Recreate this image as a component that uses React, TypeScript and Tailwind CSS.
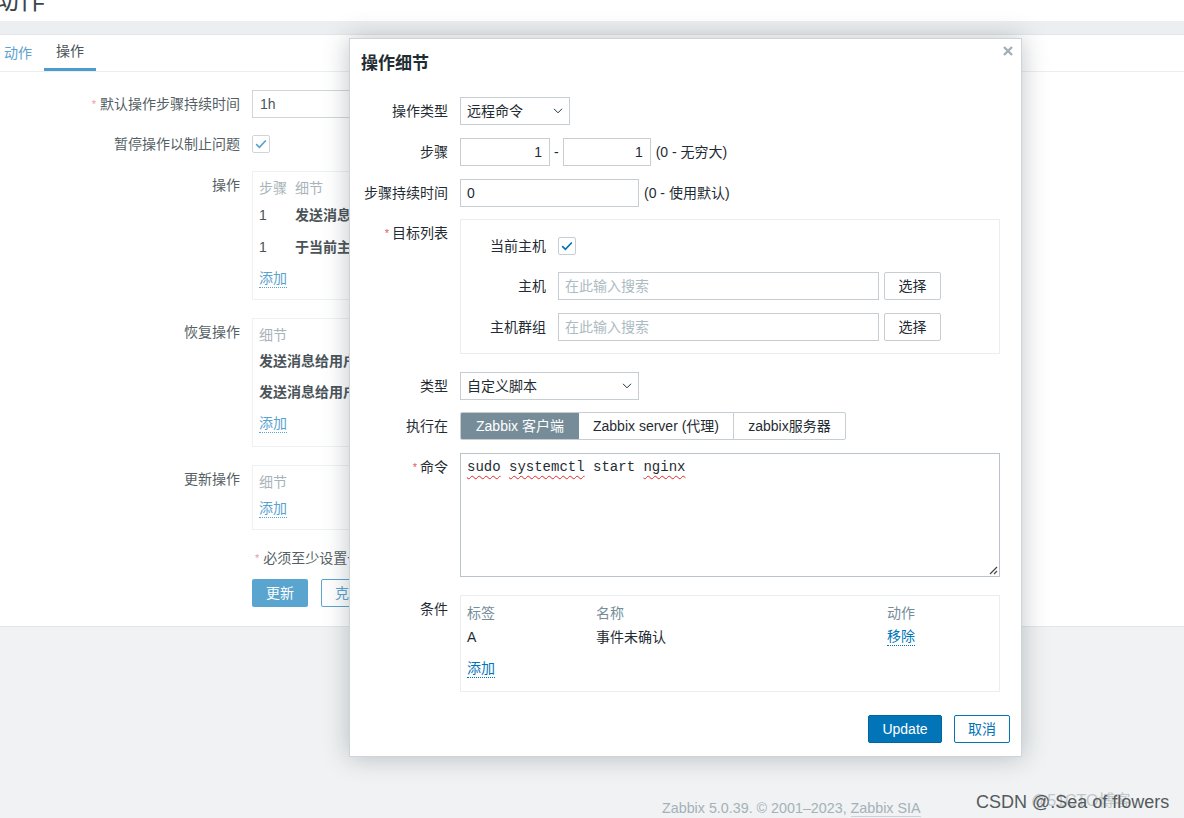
import React from 'react';

const Chevron: React.FC = () => (
  <svg width="10" height="6" viewBox="0 0 10 6" className="shrink-0">
    <path d="M1 0.8l4 4 4-4" fill="none" stroke="#1f2c33" strokeWidth="1" />
  </svg>
);

const Check: React.FC<{ color: string }> = ({ color }) => (
  <svg width="12" height="10" viewBox="0 0 12 10">
    <path d="M1.2 5.2l3.2 3.1 6.4-6.8" fill="none" stroke={color} strokeWidth="1.7" />
  </svg>
);

const Select: React.FC<{ value: string; width: string }> = ({ value, width }) => (
  <div className={`${width} h-[28px] border border-[#c6ced3] bg-white flex items-center justify-between pl-[6px] pr-[6px] leading-[26px]`}>
    <span>{value}</span>
    <Chevron />
  </div>
);

const Row: React.FC<{ label: string; required?: boolean; className?: string; children: React.ReactNode }> = ({
  label,
  required,
  className = '',
  children,
}) => (
  <div className={`flex ${className}`}>
    <div className="w-[86px] mr-[12px] shrink-0 text-right leading-[28px] whitespace-nowrap">
      {required && <span className="text-[#e45959] text-[11px] mr-[3px] align-top">*</span>}
      {label}
    </div>
    {children}
  </div>
);

const Link: React.FC<{ children: React.ReactNode; faded?: boolean }> = ({ children, faded }) => (
  <span
    className={
      faded
        ? 'text-[#5aa2d0] border-b border-dotted border-[#5aa2d0] leading-[17px] inline-block'
        : 'text-[#0275b8] border-b border-dotted border-[#0275b8] leading-[17px] inline-block'
    }
  >
    {children}
  </span>
);

// background page (the action edit form behind the popup), cut off by the popup
const BgForm: React.FC = () => {
  const label = 'w-[240px] mr-[12px] shrink-0 text-right leading-[28px] text-[#555f65] whitespace-nowrap';
  return (
    <div className="mt-[18px]">
      <div className="flex">
        <div className={label}>
          <span className="text-[#ec9a9a] text-[11px] mr-[4px] align-top">*</span>默认操作步骤持续时间
        </div>
        <div className="w-[160px] h-[28px] border border-[#cfd6da] pl-[7px] leading-[26px] text-[#4a5358]">1h</div>
      </div>

      <div className="flex mt-[12px]">
        <div className={label}>暂停操作以制止问题</div>
        <div className="h-[28px] flex items-center">
          <div className="w-[18px] h-[18px] border border-[#cfd6da] rounded-[2px] flex items-center justify-center">
            <Check color="#5aa2d0" />
          </div>
        </div>
      </div>

      <div className="flex mt-[13px]">
        <div className={label}>操作</div>
        <div className="w-[160px] h-[129px] border border-[#eef1f3] pl-[6px] pt-[5px] overflow-hidden whitespace-nowrap">
          <div className="flex leading-[22px] text-[#a9b4ba]">
            <span className="w-[36px]">步骤</span>
            <span>细节</span>
          </div>
          <div className="flex leading-[32px] text-[#4a5358]">
            <span className="w-[36px]">1</span>
            <span className="font-bold">发送消息给用户</span>
          </div>
          <div className="flex leading-[32px] text-[#4a5358]">
            <span className="w-[36px]">1</span>
            <span className="font-bold">于当前主机运行</span>
          </div>
          <div className="h-[32px] flex items-center">
            <Link faded>添加</Link>
          </div>
        </div>
      </div>

      <div className="flex mt-[18px]">
        <div className={label}>恢复操作</div>
        <div className="w-[160px] h-[129px] border border-[#eef1f3] pl-[6px] pt-[5px] overflow-hidden whitespace-nowrap">
          <div className="leading-[22px] text-[#a9b4ba]">细节</div>
          <div className="leading-[31px] font-bold text-[#4a5358]">发送消息给用户组</div>
          <div className="leading-[31px] font-bold text-[#4a5358]">发送消息给用户组</div>
          <div className="h-[32px] flex items-center">
            <Link faded>添加</Link>
          </div>
        </div>
      </div>

      <div className="flex mt-[18px]">
        <div className={label}>更新操作</div>
        <div className="w-[160px] h-[65px] border border-[#eef1f3] pl-[6px] pt-[5px]">
          <div className="leading-[22px] text-[#a9b4ba]">细节</div>
          <div className="h-[32px] flex items-center">
            <Link faded>添加</Link>
          </div>
        </div>
      </div>

      <div className="flex mt-[14px]">
        <div className="w-[252px] shrink-0" />
        <div className="leading-[28px] text-[#555f65] whitespace-nowrap">
          <span className="text-[#ec9a9a] text-[11px] mr-[4px] ml-[3px] align-top">*</span>必须至少设置一个
        </div>
      </div>

      <div className="flex mt-[7px]">
        <div className="w-[252px] shrink-0" />
        <button className="w-[56px] h-[28px] rounded-[2px] bg-[#5aa4d0] text-white">更新</button>
        <button className="ml-[13px] w-[56px] h-[28px] rounded-[2px] border border-[#5aa4d0] text-[#5aa4d0] bg-white">克隆</button>
      </div>
    </div>
  );
};

const Modal: React.FC = () => (
  <div className="absolute left-[349px] top-[38px] w-[673px] h-[719px] bg-white border border-[#cdd5d9] shadow-[0_0_24px_rgba(60,70,80,0.32)] text-[#1f2c33]">
    <button className="absolute right-[7px] top-[6px] w-[12px] h-[12px] flex items-center justify-center">
      <svg width="10" height="10" viewBox="0 0 10 10">
        <path d="M1 1l8 8M9 1l-8 8" stroke="#a3afb6" strokeWidth="2.4" />
      </svg>
    </button>

    <div className="pl-[11px] pt-[13px] leading-[24px] text-[17px] font-bold">操作细节</div>

    <div className="pl-[12px] pr-[21px] mt-[21px]">
      <Row label="操作类型">
        <Select value="远程命令" width="w-[110px]" />
      </Row>

      <Row label="步骤" className="mt-[13px]">
        <div className="w-[90px] h-[28px] border border-[#c6ced3] text-right pr-[7px] leading-[26px]">1</div>
        <span className="mx-[4px] leading-[28px]">-</span>
        <div className="w-[88px] h-[28px] border border-[#c6ced3] text-right pr-[7px] leading-[26px]">1</div>
        <span className="ml-[5px] leading-[28px]">(0 - 无穷大)</span>
      </Row>

      <Row label="步骤持续时间" className="mt-[13px]">
        <div className="w-[179px] h-[28px] border border-[#c6ced3] pl-[6px] leading-[26px]">0</div>
        <span className="ml-[5px] leading-[28px]">(0 - 使用默认)</span>
      </Row>

      <Row label="目标列表" required className="mt-[12px]">
        <div className="flex-1 h-[135px] border border-[#ebeef0] pl-[12px] pt-[12px]">
          <div className="flex">
            <div className="w-[73px] mr-[12px] text-right leading-[28px]">当前主机</div>
            <div className="h-[28px] flex items-center">
              <div className="w-[18px] h-[18px] border border-[#c6ced3] rounded-[2px] flex items-center justify-center">
                <Check color="#0275b8" />
              </div>
            </div>
          </div>
          <div className="flex mt-[12px]">
            <div className="w-[73px] mr-[12px] text-right leading-[28px]">主机</div>
            <div className="w-[321px] h-[28px] border border-[#c6ced3] pl-[6px] leading-[26px] text-[#acbbc2]">在此输入搜索</div>
            <button className="ml-[5px] w-[57px] h-[28px] border border-[#c6ced3] rounded-[2px] bg-white">选择</button>
          </div>
          <div className="flex mt-[13px]">
            <div className="w-[73px] mr-[12px] text-right leading-[28px]">主机群组</div>
            <div className="w-[321px] h-[28px] border border-[#c6ced3] pl-[6px] leading-[26px] text-[#acbbc2]">在此输入搜索</div>
            <button className="ml-[5px] w-[57px] h-[28px] border border-[#c6ced3] rounded-[2px] bg-white">选择</button>
          </div>
        </div>
      </Row>

      <Row label="类型" className="mt-[18px]">
        <Select value="自定义脚本" width="w-[179px]" />
      </Row>

      <Row label="执行在" className="mt-[12px]">
        <div className="flex h-[28px] border border-[#c6ced3] rounded-[2px] overflow-hidden">
          <div className="w-[118px] bg-[#768d99] text-white text-center leading-[26px]">Zabbix 客户端</div>
          <div className="w-[155px] border-r border-[#c6ced3] text-center leading-[26px]">Zabbix server (代理)</div>
          <div className="w-[111px] text-center leading-[26px]">zabbix服务器</div>
        </div>
      </Row>

      <Row label="命令" required className="mt-[13px]">
        <div className="relative flex-1 h-[124px] border border-[#b9c3c9] pl-[6px] pt-[3px]">
          <div className="font-['Liberation_Mono',monospace] text-[14px] leading-[20px]">
            <span className="underline decoration-wavy decoration-[#e02828] decoration-1 underline-offset-[4px]">sudo</span>{' '}
            <span className="underline decoration-wavy decoration-[#e02828] decoration-1 underline-offset-[4px]">systemctl</span>{' '}
            start{' '}
            <span className="underline decoration-wavy decoration-[#e02828] decoration-1 underline-offset-[4px]">nginx</span>
          </div>
          <svg width="10" height="10" viewBox="0 0 10 10" className="absolute right-[1px] bottom-[1px]">
            <path d="M9 2L2 9M9 6L6 9" stroke="#444" strokeWidth="1.2" />
          </svg>
        </div>
      </Row>

      <Row label="条件" className="mt-[18px]">
        <div className="flex-1 h-[97px] border border-[#ebeef0] pl-[6px] pt-[6px]">
          <div className="flex leading-[22px] text-[#768d99]">
            <span className="w-[129px]">标签</span>
            <span className="w-[291px]">名称</span>
            <span>动作</span>
          </div>
          <div className="flex leading-[26px]">
            <span className="w-[129px]">A</span>
            <span className="w-[291px]">事件未确认</span>
            <span className="flex items-center">
              <Link>移除</Link>
            </span>
          </div>
          <div className="mt-[6px] h-[26px] flex items-center">
            <Link>添加</Link>
          </div>
        </div>
      </Row>
    </div>

    <div className="flex justify-end pr-[11px] mt-[23px]">
      <button className="w-[74px] h-[28px] rounded-[2px] bg-[#0275b8] border border-[#02659f] text-white">Update</button>
      <button className="ml-[12px] w-[56px] h-[28px] rounded-[2px] border border-[#0275b8] text-[#0275b8] bg-white">取消</button>
    </div>
  </div>
);

const App: React.FC = () => {
  return (
    <div className="relative w-[1184px] h-[818px] overflow-hidden bg-white text-[14px] font-['Liberation_Sans','Noto_Sans_CJK_SC',sans-serif]">
      <div className="h-[21px] overflow-hidden">
        <div className="-mt-[16px] -ml-[7px] text-[26px] leading-[32px] text-[#3b464c]">动作</div>
      </div>
      <div className="h-[14px] bg-[#eceff1] border-b border-[#e2e6e9]" />

      <main className="h-[591px] bg-white">
        <div className="flex h-[37px] border-b border-[#ebeef0] -ml-[8px]">
          <div className="px-[12px] leading-[36px] text-[#5aa2d0]">动作</div>
          <div className="px-[12px] leading-[33px] text-[#4a5358] border-b-[3px] border-[#4b9bd0]">操作</div>
        </div>
        <BgForm />
      </main>

      <footer className="h-[192px] bg-[#f0f2f3] border-t border-[#e2e6e9]">
        <div className="pl-[662px] mt-[171px] leading-[20px] text-[14.3px] text-[#a5b1b8] whitespace-nowrap">
          Zabbix 5.0.39. © 2001–2023, <span className="border-b border-[#cbd3d8]">Zabbix SIA</span>
        </div>
      </footer>

      <Modal />

      {/* watermarks */}
      <div className="absolute left-[1031px] top-[790px] text-[16px] leading-[22px] text-[#c3c7ca] whitespace-nowrap">@51CTO博客</div>
      <div className="absolute left-[976px] top-[790px] text-[18px] leading-[24px] text-[#555a5d] whitespace-nowrap">
        CSDN @.Sea of flowers
      </div>
    </div>
  );
};

export default App;
